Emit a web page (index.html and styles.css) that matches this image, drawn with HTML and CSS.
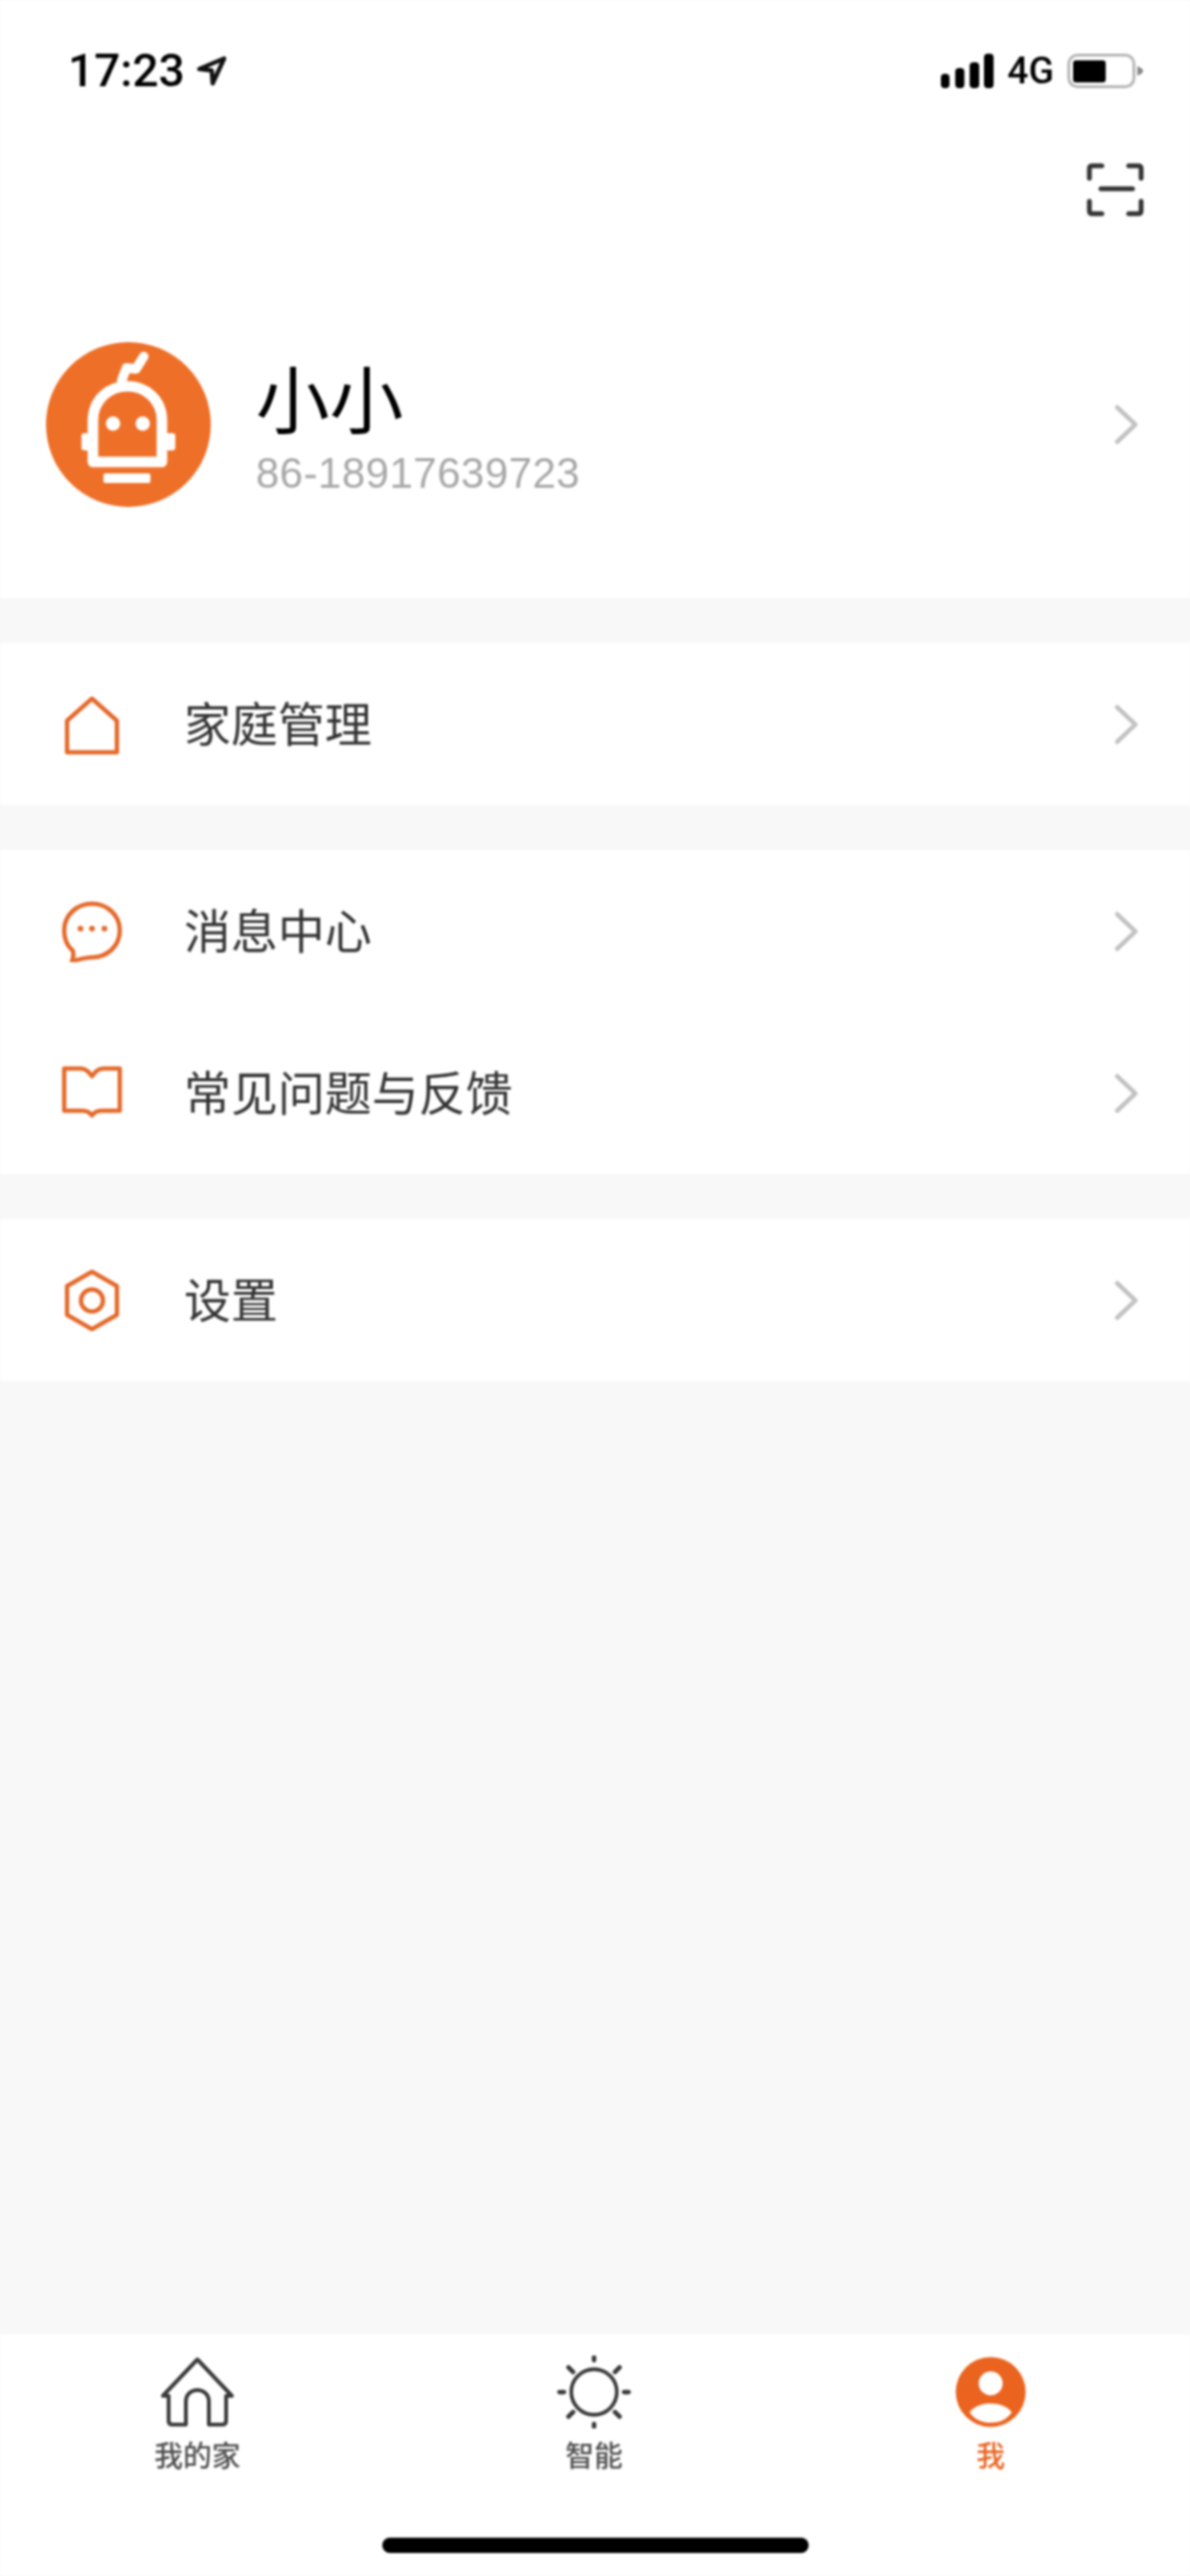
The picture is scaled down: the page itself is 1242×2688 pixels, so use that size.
FILE: index.html
```html
<!DOCTYPE html>
<html lang="zh">
<head>
<meta charset="utf-8">
<title>我</title>
<link rel="stylesheet" href="styles.css">
</head>
<body>
<div class="app">
  <header class="status">
    <div class="time-group">
      <span class="time">17:23</span>
      <svg class="loc" viewBox="0 0 32 32"><path d="M29 3 L3 14 L16 15.5 L17 29 Z" fill="none" stroke="#111" stroke-width="4.5" stroke-linejoin="round"/></svg>
    </div>
    <div class="status-right">
      <svg class="signal" viewBox="0 0 55 36"><rect x="0" y="21" width="9" height="15" rx="4"/><rect x="15" y="15" width="9.5" height="21" rx="4"/><rect x="30" y="9" width="10" height="27" rx="4"/><rect x="45" y="0" width="10" height="36" rx="4"/></svg>
      <span class="net">4G</span>
      <svg class="battery" viewBox="0 0 80 36"><rect x="1.5" y="1.5" width="68" height="33" rx="9" fill="#fff" stroke="#b5b5b5" stroke-width="3"/><rect x="6" y="7" width="34" height="23" rx="3" fill="#000"/><path d="M73 13 C76 14 79 16 79 18 C79 20 76 22 73 23 Z" fill="#888"/></svg>
    </div>
  </header>

  <div class="scan-row">
    <svg class="scan" viewBox="0 0 60 56" fill="none" stroke="#333" stroke-width="5" stroke-linecap="round" stroke-linejoin="round"><path d="M3 16 V6 Q3 3 6 3 H16"/><path d="M44 3 H54 Q57 3 57 6 V16"/><path d="M3 40 V50 Q3 53 6 53 H16"/><path d="M44 53 H54 Q57 53 57 50 V40"/><path d="M15 27 H48"/></svg>
  </div>

  <section class="profile">
    <svg class="avatar" viewBox="0 0 172 172">
      <circle cx="86" cy="86" r="86" fill="#ee7028"/>
      <path d="M79 40 L84 27 L94 28 L102 15" fill="none" stroke="#fff" stroke-width="10" stroke-linejoin="round" stroke-linecap="round"/>
      <path d="M49 125 V82 C49 60 66 46 85 46 C104 46 121 60 121 82 V125 Z" fill="#ee7028" stroke="#fff" stroke-width="11" stroke-linejoin="round"/>
      <rect x="37" y="95" width="9" height="18" rx="3" fill="#fff"/>
      <rect x="124" y="95" width="11" height="18" rx="3" fill="#fff"/>
      <circle cx="70" cy="85" r="7.5" fill="#fff"/>
      <circle cx="101" cy="85" r="7.5" fill="#fff"/>
      <rect x="60" y="137" width="49" height="10" rx="2" fill="#fff"/>
    </svg>
    <div class="who">
      <div class="name">小小</div>
      <div class="phone">86-18917639723</div>
    </div>
    <svg class="chev" viewBox="0 0 26 42"><path d="M3 3 L22 21 L3 39"/></svg>
  </section>

  <section class="group">
    <div class="row">
      <svg class="ico" viewBox="0 0 64 64"><path d="M6 61 V28 L32 5 L58 28 V61 Z"/></svg>
      <span class="label">家庭管理</span>
      <svg class="chev" viewBox="0 0 26 42"><path d="M3 3 L22 21 L3 39"/></svg>
    </div>
  </section>

  <section class="group">
    <div class="row">
      <svg class="ico" viewBox="0 0 64 64"><path d="M32 3 C48 3 61 15 61 31 C61 47 48 59 32 59 C24 59 17 62 11 63 C13 59 13 56 12 52 C6 47 3 39 3 31 C3 15 16 3 32 3 Z"/><circle class="dot" cx="20" cy="29" r="3"/><circle class="dot" cx="32" cy="29" r="3"/><circle class="dot" cx="45" cy="29" r="3"/></svg>
      <span class="label">消息中心</span>
      <svg class="chev" viewBox="0 0 26 42"><path d="M3 3 L22 21 L3 39"/></svg>
    </div>
    <div class="row">
      <svg class="ico" viewBox="0 0 64 64"><path d="M3 6 H20 C26 6 29 10 32 14 C35 10 38 6 44 6 H61 V50 H42 C37 50 34 52 32 55 C30 52 27 50 22 50 H3 Z"/></svg>
      <span class="label">常见问题与反馈</span>
      <svg class="chev" viewBox="0 0 26 42"><path d="M3 3 L22 21 L3 39"/></svg>
    </div>
  </section>

  <section class="group">
    <div class="row">
      <svg class="ico" viewBox="0 0 64 64"><path d="M32 2 L58 17 V47 L32 62 L6 47 V17 Z"/><circle cx="32" cy="32" r="11.5"/></svg>
      <span class="label">设置</span>
      <svg class="chev" viewBox="0 0 26 42"><path d="M3 3 L22 21 L3 39"/></svg>
    </div>
  </section>

  <div class="spacer"></div>

  <nav class="tabs">
    <div class="tab">
      <svg class="tab-ico" viewBox="0 0 80 76" fill="none" stroke="#3a3a3a" stroke-width="4" stroke-linejoin="round" stroke-linecap="round"><path d="M10 42 H4 L40 4 L76 42 H70 V68 Q70 72 66 72 H52 V48 C52 40 46 36 40 36 C34 36 28 40 28 48 V72 H14 Q10 72 10 68 Z"/></svg>
      <span class="tab-label">我的家</span>
    </div>
    <div class="tab">
      <svg class="tab-ico" viewBox="0 0 80 80" fill="none" stroke="#3a3a3a" stroke-width="4" stroke-linecap="round"><circle cx="40" cy="40" r="25"/><path d="M40 2 V5 M40 75 V78 M2 40 H7 M73 40 H78 M12 13 L17 18 M63 62 L68 67 M68 13 L63 18 M17 62 L12 67" stroke-width="5"/></svg>
      <span class="tab-label">智能</span>
    </div>
    <div class="tab tab-on">
      <svg class="tab-ico" viewBox="-1 -1 76 76"><circle cx="37" cy="37" r="36.5" fill="#ea6420"/><circle cx="37" cy="28" r="12.5" fill="#fff"/><path d="M15 58 C20 52 28 49 37 49 C46 49 54 52 59 58 C54 66 46 69 37 69 C28 69 20 66 15 58 Z" fill="#fff"/></svg>
      <span class="tab-label">我</span>
    </div>
    <div class="home-bar"></div>
  </nav>
</div>
</body>
</html>
```

FILE: styles.css
```css
* { box-sizing: border-box; }
html, body { margin: 0; padding: 0; background: #f8f8f8; }
.app {
  width: 1242px;
  height: 2688px;
  display: flex;
  flex-direction: column;
  background: #f8f8f8;
  font-family: "Noto Sans CJK SC", "Liberation Sans", sans-serif;
  color: #333;
  filter: blur(1px);
}
.status {
  background: #fff;
  height: 145px;
  padding: 2px 48px 0 71px;
  display: flex;
  justify-content: space-between;
  align-items: center;
  flex: none;
}
.time-group { display: flex; align-items: center; gap: 12px; }
.time { font: 500 48px/56px Roboto, sans-serif; color: #000; }
.loc { width: 32px; height: 32px; }
.status-right { display: flex; align-items: center; }
.signal { width: 55px; height: 36px; fill: #000; }
.net { font: 500 39px/44px Roboto, sans-serif; color: #000; margin: 0 14px; }
.battery { width: 80px; height: 36px; }
.scan-row {
  background: #fff;
  flex: none;
  height: 85px;
  padding: 25px 48px 0 0;
  display: flex;
  justify-content: flex-end;
}
.scan { width: 60px; height: 56px; }
.profile {
  background: #fff;
  flex: none;
  height: 394px;
  padding: 32px 53px 0 48px;
  display: flex;
  align-items: center;
}
.avatar { width: 172px; height: 172px; flex: none; }
.who { flex: 1; margin-left: 47px; }
.name { font-size: 77px; line-height: 92px; color: #000; }
.phone { font: 400 44px/50px "Liberation Sans", sans-serif; letter-spacing: 0.4px; color: #a8a8a8; margin-top: 9px; }
.chev { width: 26px; height: 42px; flex: none; fill: none; stroke: #c2c2c2; stroke-width: 4.5; stroke-linecap: round; stroke-linejoin: round; }
.group { background: #fff; margin-top: 47px; flex: none; }
.row {
  height: 169px;
  padding: 0 53px 0 64px;
  display: flex;
  align-items: center;
}
.ico { width: 64px; height: 64px; flex: none; fill: none; stroke: #e4692a; stroke-width: 4.5; stroke-linejoin: round; stroke-linecap: round; }
.ico .dot { fill: #e4692a; stroke: none; }
.label { flex: 1; margin: 0 0 5px 64px; font-size: 49px; line-height: 64px; color: #333; }
.spacer { flex: 1; }
.tabs {
  position: relative;
  background: #fff;
  flex: none;
  height: 252px;
  display: grid;
  grid-template-columns: repeat(3, 1fr);
  align-items: start;
  padding-top: 22px;
}
.tab { display: flex; flex-direction: column; align-items: center; margin-left: -2px; }
.tab-ico { width: 80px; height: 76px; }
.tab-label { font-size: 30px; line-height: 40px; font-weight: 500; color: #505050; margin-top: 6px; }
.tab-on .tab-label { color: #ea6420; }
.home-bar {
  position: absolute;
  left: 399px;
  top: 212px;
  width: 445px;
  height: 16px;
  border-radius: 8px;
  background: #000;
}
```
